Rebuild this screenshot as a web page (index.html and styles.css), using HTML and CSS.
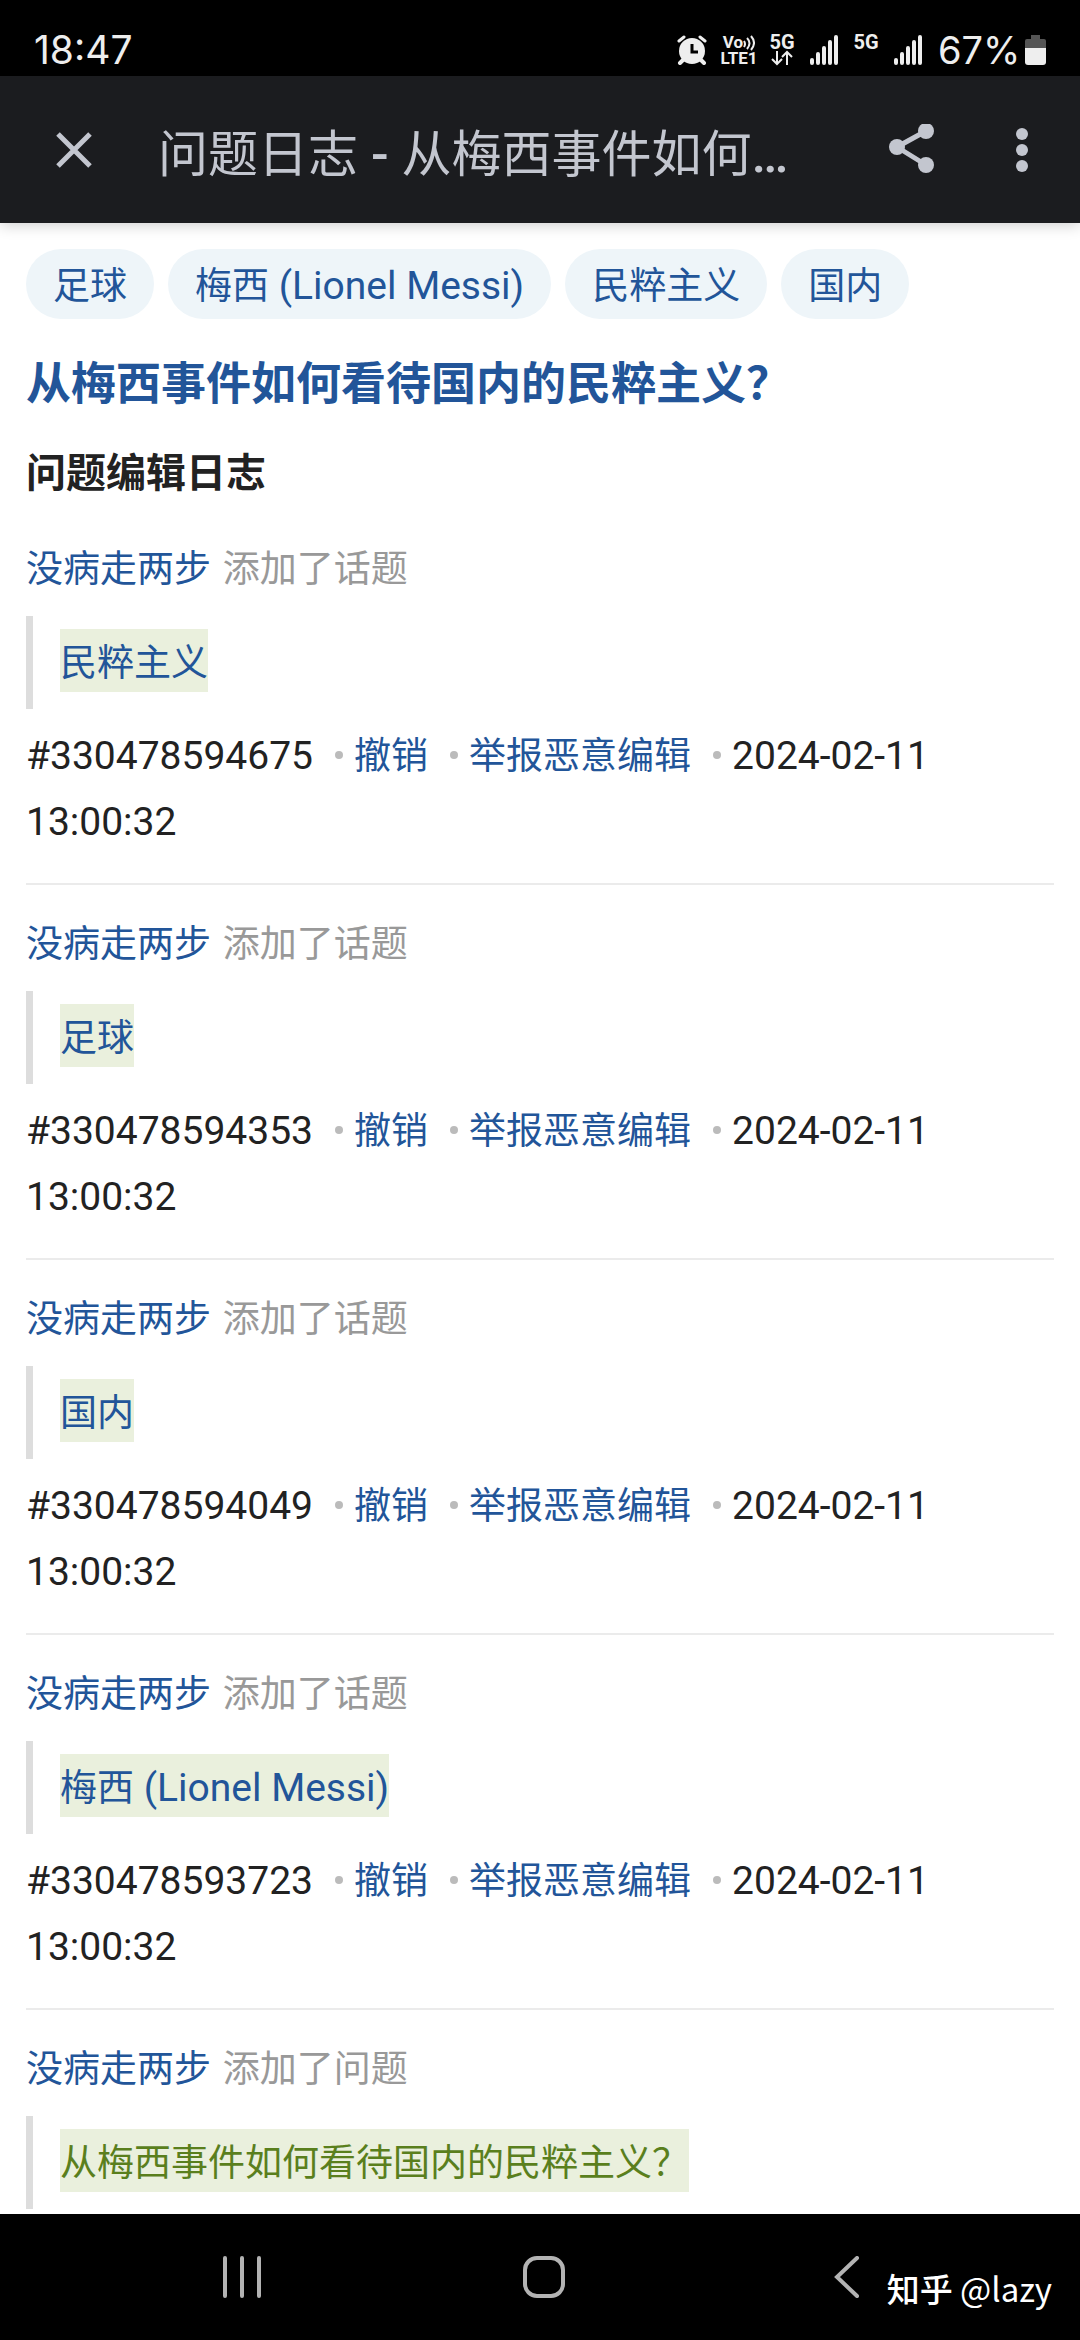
FILE: index.html
```html
<!DOCTYPE html>
<html lang="zh-CN">
<head>
<meta charset="utf-8">
<meta name="viewport" content="width=device-width, initial-scale=1">
<title>问题日志 - 从梅西事件如何看待国内的民粹主义？</title>
<link rel="stylesheet" href="styles.css">
</head>
<body>
<div class="status">
  <span class="clock">18:47</span>
  <div class="status-icons">
    <svg class="alarm" viewBox="0 0 30 30" width="30" height="30" aria-hidden="true">
      <circle cx="15" cy="16" r="13" fill="#eee"/>
      <path d="M7 24 3 28M23 24l4 4" stroke="#eee" stroke-width="4" stroke-linecap="round"/>
      <path d="M2 6 7 2M28 6l-5-4" stroke="#eee" stroke-width="3" stroke-linecap="round"/>
      <path d="M15 9v8h6" fill="none" stroke="#000" stroke-width="3"/>
    </svg>
    <span class="net lte"><span class="volte">Vo<svg viewBox="0 0 12 16" width="12" height="16" aria-hidden="true"><path d="M1 6q2 3 0 6M4 3q5 5 0 11M8 1q6 7 0 14" fill="none" stroke="#eee" stroke-width="2"/></svg></span><span>LTE1</span></span>
    <span class="net fiveg"><span>5G</span>
      <svg viewBox="0 0 24 16" width="24" height="16" aria-hidden="true"><path d="M7 1v13M2 9l5 5 5-5M17 15V2M12 7l5-5 5 5" fill="none" stroke="#eee" stroke-width="2"/></svg>
    </span>
    <svg class="signal" viewBox="0 0 28 30" width="28" height="30" aria-hidden="true"><path d="M2 25v3M8 19v9M14 13v15M20 7v21M26 2v26" stroke="#eee" stroke-width="4" stroke-linecap="round"/></svg>
    <span class="net fiveg"><span>5G</span></span>
    <svg class="signal" viewBox="0 0 28 30" width="28" height="30" aria-hidden="true"><path d="M2 25v3M8 19v9M14 13v15M20 7v21M26 2v26" stroke="#eee" stroke-width="4" stroke-linecap="round"/></svg>
    <span class="percent">67%</span>
    <svg class="battery" viewBox="0 0 21 30" width="21" height="30" aria-hidden="true"><path d="M6 0h9v4h4q2 0 2 2v7H0V6q0-2 2-2h4z" fill="#555"/><path d="M0 13h21v14q0 3-3 3H3q-3 0-3-3z" fill="#eee"/></svg>
  </div>
</div>

<header class="toolbar">
  <button class="icon-button" aria-label="关闭"><svg viewBox="0 0 36 36" width="36" height="36"><path d="M2 2l32 32M34 2 2 34" stroke="#c3c6cf" stroke-width="5"/></svg></button>
  <div class="page-name">问题日志<span class="lat"> - </span>从梅西事件如何<span class="lat">…</span></div>
  <button class="icon-button share" aria-label="分享"><svg viewBox="0 2 46 52" width="46" height="52"><path d="M37 9 8 25l29 18" fill="none" stroke="#c3c6cf" stroke-width="5"/><circle cx="37" cy="9" r="8" fill="#c3c6cf"/><circle cx="8" cy="25" r="8" fill="#c3c6cf"/><circle cx="37" cy="43" r="8" fill="#c3c6cf"/></svg></button>
  <button class="icon-button more" aria-label="更多"><svg viewBox="0 0 12 44" width="12" height="44"><g fill="#c3c6cf"><circle cx="6" cy="6" r="6"/><circle cx="6" cy="22" r="6"/><circle cx="6" cy="38" r="6"/></g></svg></button>
</header>

<main class="content">
  <nav class="topics">
    <a class="chip" href="#">足球</a>
    <a class="chip" href="#">梅西<span class="lat"> (Lionel Messi)</span></a>
    <a class="chip" href="#">民粹主义</a>
    <a class="chip" href="#">国内</a>
  </nav>
  <h1 class="question"><a href="#">从梅西事件如何看待国内的民粹主义？</a></h1>
  <h2 class="section">问题编辑日志</h2>

  <article class="entry">
    <p class="line"><a href="#">没病走两步</a><span class="lat"> </span><span class="action">添加了话题</span></p>
    <blockquote class="change"><a class="added" href="#">民粹主义</a></blockquote>
    <p class="line"><span class="lat">#330478594675</span><a class="item" href="#">撤销</a><a class="item" href="#">举报恶意编辑</a><span class="item lat">2024-02-11</span> <span class="lat">13:00:32</span></p>
  </article>
  <article class="entry">
    <p class="line"><a href="#">没病走两步</a><span class="lat"> </span><span class="action">添加了话题</span></p>
    <blockquote class="change"><a class="added" href="#">足球</a></blockquote>
    <p class="line"><span class="lat">#330478594353</span><a class="item" href="#">撤销</a><a class="item" href="#">举报恶意编辑</a><span class="item lat">2024-02-11</span> <span class="lat">13:00:32</span></p>
  </article>
  <article class="entry">
    <p class="line"><a href="#">没病走两步</a><span class="lat"> </span><span class="action">添加了话题</span></p>
    <blockquote class="change"><a class="added" href="#">国内</a></blockquote>
    <p class="line"><span class="lat">#330478594049</span><a class="item" href="#">撤销</a><a class="item" href="#">举报恶意编辑</a><span class="item lat">2024-02-11</span> <span class="lat">13:00:32</span></p>
  </article>
  <article class="entry">
    <p class="line"><a href="#">没病走两步</a><span class="lat"> </span><span class="action">添加了话题</span></p>
    <blockquote class="change"><a class="added" href="#">梅西<span class="lat"> (Lionel Messi)</span></a></blockquote>
    <p class="line"><span class="lat">#330478593723</span><a class="item" href="#">撤销</a><a class="item" href="#">举报恶意编辑</a><span class="item lat">2024-02-11</span> <span class="lat">13:00:32</span></p>
  </article>
  <article class="entry">
    <p class="line"><a href="#">没病走两步</a><span class="lat"> </span><span class="action">添加了问题</span></p>
    <blockquote class="change"><ins class="added">从梅西事件如何看待国内的民粹主义？</ins></blockquote>
  </article>
</main>

<footer class="navbar">
  <button aria-label="最近任务"><svg viewBox="0 0 42 42" width="42" height="42"><path d="M4 2v38M21 2v38M38 2v38" stroke="#b3b3b3" stroke-width="4" stroke-linecap="round"/></svg></button>
  <button aria-label="主屏幕"><svg viewBox="0 0 42 42" width="42" height="42"><rect x="2" y="2" width="38" height="38" rx="12" fill="none" stroke="#b3b3b3" stroke-width="4"/></svg></button>
  <button aria-label="返回"><svg viewBox="0 0 42 42" width="42" height="42"><path d="M31 2 11 21l20 19" fill="none" stroke="#b3b3b3" stroke-width="4" stroke-linecap="round"/></svg></button>
  <span class="watermark"><b>知乎</b> @lazy</span>
</footer>
</body>
</html>
```
FILE: styles.css
```css
* {
  box-sizing: border-box;
}

body {
  margin: 0;
  min-height: 100vh;
  display: flex;
  flex-direction: column;
  background: #fff;
  color: #222;
  font-family: "Noto Sans CJK SC", sans-serif;
  font-size: 37px;
  line-height: 66px;
}

a {
  color: #225599;
  text-decoration: none;
}

button {
  display: flex;
  align-items: center;
  justify-content: center;
  padding: 0;
  border: 0;
  background: none;
}

svg {
  display: block;
  flex: none;
}

.lat {
  font-family: Roboto, sans-serif;
  font-size: 39px;
  line-height: 1;
  white-space: pre-wrap;
}

/* Phone status bar */
.status {
  display: flex;
  justify-content: space-between;
  align-items: flex-start;
  height: 76px;
  padding: 35px 34px 0;
  background: #000;
  color: #eee;
  font-family: Inter, sans-serif;
  font-size: 39px;
  line-height: 30px;
}

.status-icons {
  display: flex;
}

.net {
  display: flex;
  flex-direction: column;
  align-items: center;
  font: 700 20px/15px Roboto, sans-serif;
}

.lte {
  width: 38px;
  margin-left: 13px;
  font-size: 17px;
}

.volte {
  display: flex;
}

.fiveg {
  width: 24px;
  margin-left: 16px;
}

.lte + .fiveg {
  margin-left: 12px;
}

.signal,
.percent {
  margin-left: 16px;
}

.percent {
  width: 79px;
  font-size: 38px;
}

.battery {
  margin-left: 8px;
}

/* Browser toolbar */
.toolbar {
  display: flex;
  align-items: center;
  height: 147px;
  padding: 0 36px;
  background: #1b1c1f;
  color: #c3c6cf;
  box-shadow: 0 2px 14px rgba(0, 0, 0, 0.2);
}

.icon-button {
  width: 76px;
  height: 76px;
}

.page-name {
  flex: 1;
  margin-left: 46px;
  font-size: 50px;
  white-space: nowrap;
}

.page-name .lat {
  font-size: 52px;
  font-weight: 500;
}

.more {
  width: 44px;
  margin-left: 50px;
}

/* Question log */
.content {
  flex: 1;
  padding: 26px 26px 5px;
}

.topics {
  display: flex;
  flex-wrap: wrap;
  gap: 14px;
}

.chip {
  padding: 1px 27px 3px;
  border-radius: 35px;
  background: #eef5f9;
}

.question {
  margin: 29px 0 0;
  font-size: 45px;
}

.section {
  margin: 23px 0 30px;
  font-size: 40px;
}

.entry + .entry {
  margin-top: 31px;
  padding-top: 23px;
  border-top: 2px solid #ebebeb;
}

.line {
  margin: 0;
}

.action {
  margin-left: 2px;
  color: #999;
}

.change {
  margin: 17px 0 11px;
  padding: 13px 27px 14px;
  border-left: 7px solid #ddd;
}

.entry:last-child .change {
  margin-bottom: 0;
}

.added {
  display: inline-block;
  height: 63px;
  line-height: 63px;
  vertical-align: top;
  background: #eaf0dd;
}

ins.added {
  color: #5a7f1d;
  text-decoration: none;
}

.item::before {
  content: "";
  display: inline-block;
  width: 8px;
  height: 8px;
  margin: 0 11px 0 22px;
  border-radius: 4px;
  background: #bbb;
  vertical-align: 10px;
}

/* System navigation */
.navbar {
  position: relative;
  display: flex;
  height: 126px;
  padding: 0 82px 0 91px;
  background: #000;
}

.navbar button {
  flex: 1;
}

.watermark {
  position: absolute;
  right: 28px;
  bottom: 19px;
  color: #fff;
  font-size: 33px;
}

.watermark b {
  font-weight: 500;
}
```
